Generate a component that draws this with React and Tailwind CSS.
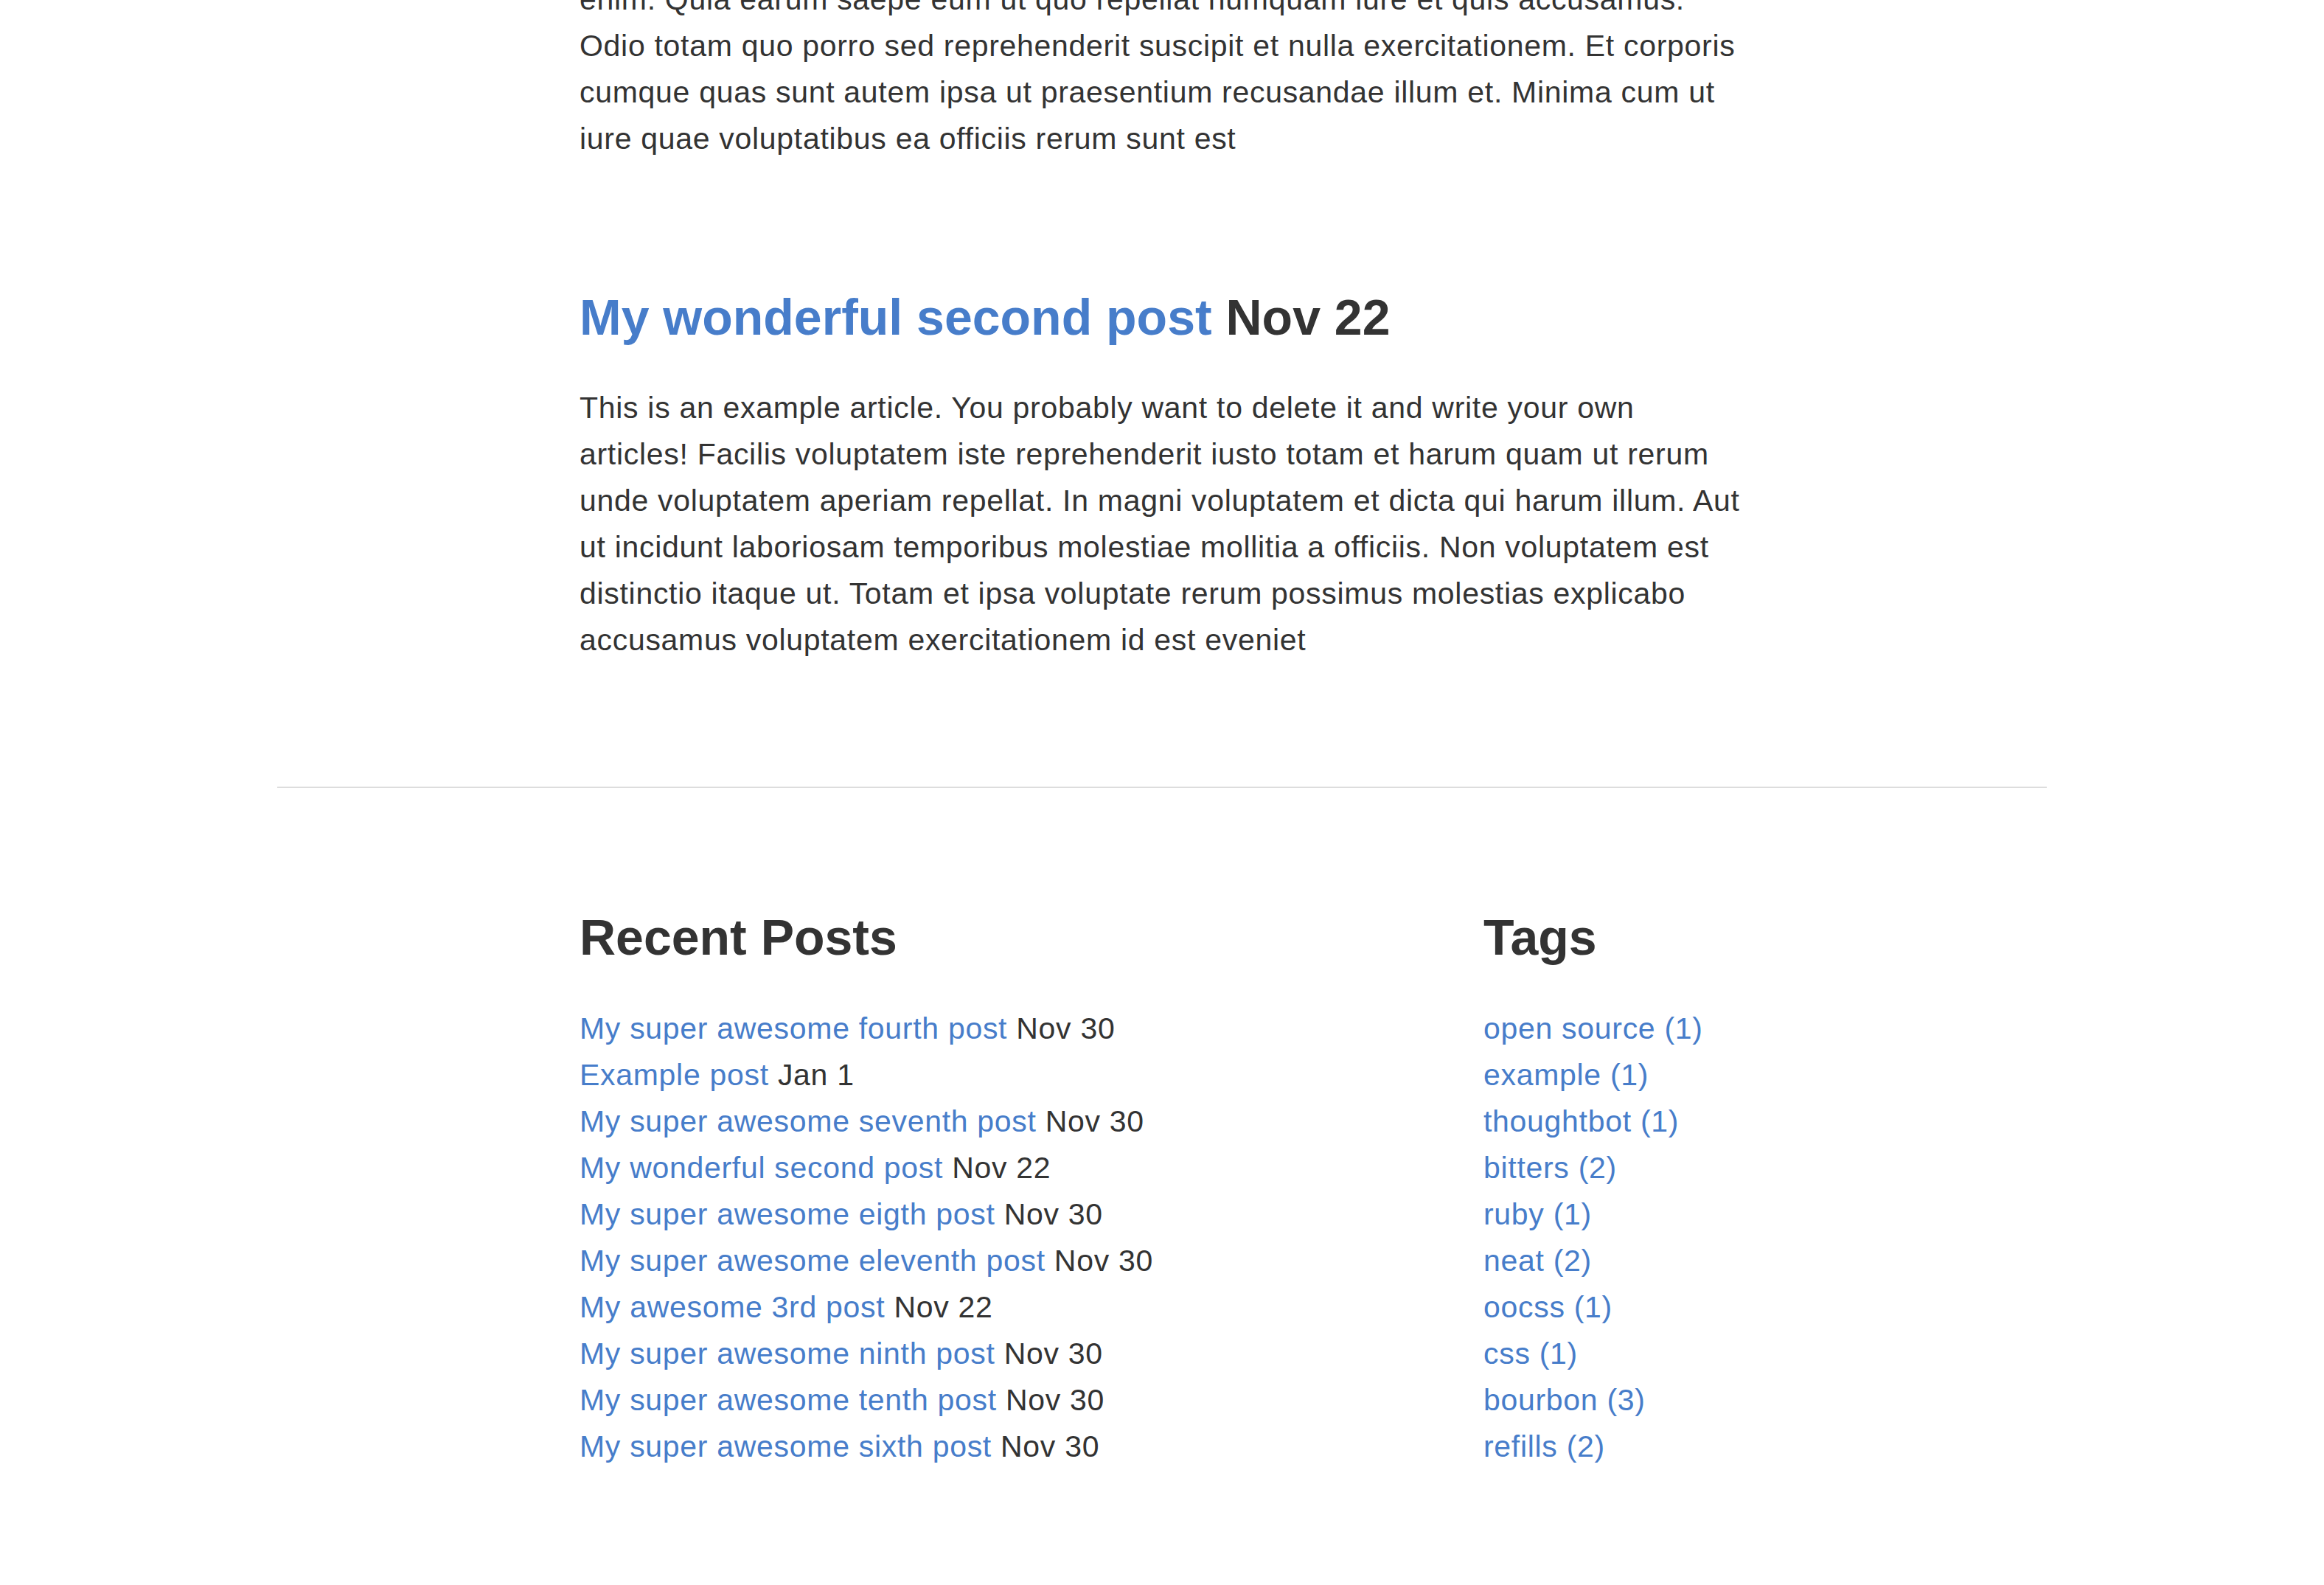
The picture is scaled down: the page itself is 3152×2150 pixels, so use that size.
import React from "react";

const recent = [
  ["My super awesome fourth post", "Nov 30"],
  ["Example post", "Jan 1"],
  ["My super awesome seventh post", "Nov 30"],
  ["My wonderful second post", "Nov 22"],
  ["My super awesome eigth post", "Nov 30"],
  ["My super awesome eleventh post", "Nov 30"],
  ["My awesome 3rd post", "Nov 22"],
  ["My super awesome ninth post", "Nov 30"],
  ["My super awesome tenth post", "Nov 30"],
  ["My super awesome sixth post", "Nov 30"],
];

const tags = [
  "open source (1)",
  "example (1)",
  "thoughtbot (1)",
  "bitters (2)",
  "ruby (1)",
  "neat (2)",
  "oocss (1)",
  "css (1)",
  "bourbon (3)",
  "refills (2)",
];

export default function App() {
  return (
    <div className="min-h-[2150px] bg-white font-['Liberation_Sans',Arial,sans-serif] text-[#333] overflow-hidden">
      <div className="mx-auto w-[2400px]">
        <div className="pl-[410px] w-[2060px] -mt-[32px]">
          <p className="text-[41px] leading-[63px] tracking-[0.7px]">
            enim. Quia earum saepe eum ut quo repellat numquam iure et quis accusamus.
            <br />
            Odio totam quo porro sed reprehenderit suscipit et nulla exercitationem. Et corporis
            <br />
            cumque quas sunt autem ipsa ut praesentium recusandae illum et. Minima cum ut
            <br />
            iure quae voluptatibus ea officiis rerum sunt est
          </p>

          <h2 className="mt-[168px] text-[68px] leading-[85px] font-bold">
            <a className="text-[#477dca]">My wonderful second post</a> Nov 22
          </h2>

          <p className="mt-[49px] text-[41px] leading-[63px] tracking-[0.7px]">
            This is an example article. You probably want to delete it and write your own
            <br />
            articles! Facilis voluptatem iste reprehenderit iusto totam et harum quam ut rerum
            <br />
            unde voluptatem aperiam repellat. In magni voluptatem et dicta qui harum illum. Aut
            <br />
            ut incidunt laboriosam temporibus molestiae mollitia a officiis. Non voluptatem est
            <br />
            distinctio itaque ut. Totam et ipsa voluptate rerum possimus molestias explicabo
            <br />
            accusamus voluptatem exercitationem id est eveniet
          </p>
        </div>

        <hr className="mt-[167px] border-0 h-[2px] bg-[#dddddd]" />

        <div className="pl-[410px] mt-[160px] flex">
          <div className="w-[1226px]">
            <h3 className="text-[68px] leading-[85px] font-bold">Recent Posts</h3>
            <ul className="mt-[50px] text-[41px] leading-[63px] tracking-[0.7px]">
              {recent.map(([t, d]) => (
                <li key={t}>
                  <a className="text-[#477dca]">{t}</a> {d}
                </li>
              ))}
            </ul>
          </div>
          <div>
            <h3 className="text-[68px] leading-[85px] font-bold">Tags</h3>
            <ul className="mt-[50px] text-[41px] leading-[63px] tracking-[0.7px]">
              {tags.map((t) => (
                <li key={t}>
                  <a className="text-[#477dca]">{t}</a>
                </li>
              ))}
            </ul>
          </div>
        </div>
      </div>
    </div>
  );
}
